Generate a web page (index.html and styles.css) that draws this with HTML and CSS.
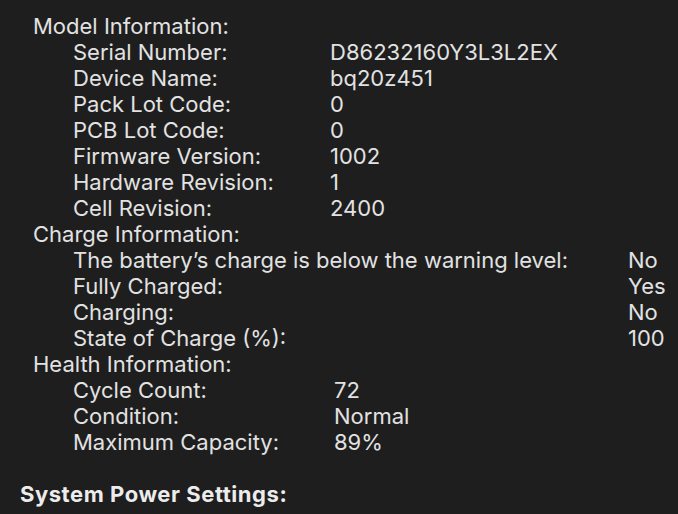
FILE: index.html
```html
<!DOCTYPE html>
<html lang="en">
<head>
  <meta charset="UTF-8" />
  <title>System Information - Power</title>
  <link rel="stylesheet" href="styles.css">
</head>
<body>
  <div class="report">
    <div class="section">
      <div class="heading">Model Information:</div>
      <div class="rows model">
        <span>Serial Number:</span><span>D86232160Y3L3L2EX</span>
        <span>Device Name:</span><span>bq20z451</span>
        <span>Pack Lot Code:</span><span>0</span>
        <span>PCB Lot Code:</span><span>0</span>
        <span>Firmware Version:</span><span>1002</span>
        <span>Hardware Revision:</span><span>1</span>
        <span>Cell Revision:</span><span>2400</span>
      </div>
    </div>

    <div class="section">
      <div class="heading">Charge Information:</div>
      <div class="rows charge">
        <span>The battery’s charge is below the warning level:</span><span>No</span>
        <span>Fully Charged:</span><span>Yes</span>
        <span>Charging:</span><span>No</span>
        <span>State of Charge (%):</span><span>100</span>
      </div>
    </div>

    <div class="section">
      <div class="heading">Health Information:</div>
      <div class="rows health">
        <span>Cycle Count:</span><span>72</span>
        <span>Condition:</span><span>Normal</span>
        <span>Maximum Capacity:</span><span>89%</span>
      </div>
    </div>
  </div>

  <div class="group-title">System Power Settings:</div>
</body>
</html>
```
FILE: styles.css
```css
* {
  margin: 0;
  padding: 0;
  box-sizing: border-box;
  font-family: Inter, 'Noto Sans', 'Liberation Sans', sans-serif;
}

body {
  background-color: #1e1e1e;
  color: #e2e2e2;
  font-size: 22px;
  line-height: 26px;
  padding: 13px 0 0 20px;
  overflow: hidden;
}

.report {
  padding-left: 13px;
}

.rows {
  display: grid;
  padding-left: 40px;
}

.model {
  grid-template-columns: 257px auto;
}

.charge {
  grid-template-columns: 555px auto;
}

.health {
  grid-template-columns: 261px auto;
}

.group-title {
  margin-top: 26px;
  font-weight: 700;
  letter-spacing: 0.55px;
  color: #ececec;
}
```
